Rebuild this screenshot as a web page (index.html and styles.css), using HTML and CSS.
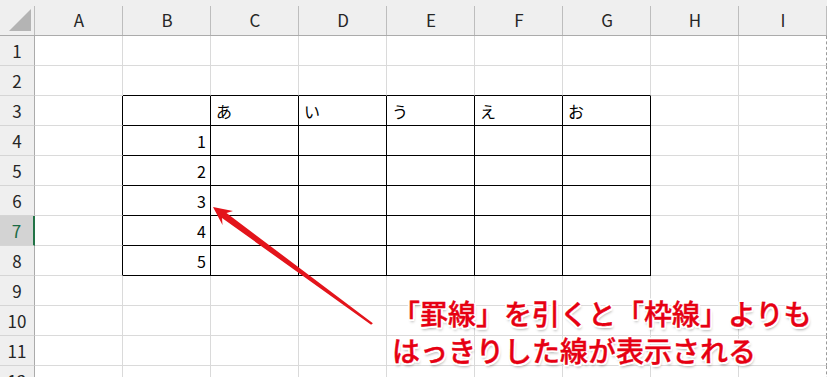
FILE: index.html
```html
<!DOCTYPE html>
<html lang="ja">
<head>
    <meta charset="UTF-8">
    <meta name="viewport" content="width=device-width, initial-scale=1.0">
    <title>罫線と枠線</title>
    <link rel="stylesheet" href="styles.css">
</head>
<body>
    <div class="page">
        <div class="sheet" id="sheet">
            <div class="corner"><span class="corner-mark"></span></div>
        </div>

        <svg class="arrow" width="827" height="377" viewBox="0 0 827 377">
            <polygon points="213,207 233,211 226.5,213 372.9,323.2 371.1,324.8 222,218 222.5,225" />
        </svg>

        <div class="note">「罫線」を引くと「枠線」よりも<br>はっきりした線が表示される</div>
    </div>

    <script>
        var cols = ['A', 'B', 'C', 'D', 'E', 'F', 'G', 'H', 'I'];
        var rowCount = 12;
        var activeRow = 7;

        // values keyed by row number, then column index (A = 0)
        var data = {
            3: { 2: 'あ', 3: 'い', 4: 'う', 5: 'え', 6: 'お' },
            4: { 1: '1' },
            5: { 1: '2' },
            6: { 1: '3' },
            7: { 1: '4' },
            8: { 1: '5' }
        };

        // ruled range B3:G8
        var ruleTop = 3, ruleBottom = 8, ruleLeft = 1, ruleRight = 6;

        var sheet = document.getElementById('sheet');

        cols.forEach(function (name) {
            var head = document.createElement('div');
            head.className = 'col-head';
            head.textContent = name;
            sheet.appendChild(head);
        });

        for (var r = 1; r <= rowCount; r++) {
            var rowHead = document.createElement('div');
            rowHead.className = 'row-head' + (r === activeRow ? ' active' : '');
            rowHead.textContent = r;
            sheet.appendChild(rowHead);

            for (var c = 0; c < cols.length; c++) {
                var cell = document.createElement('div');
                var classes = ['cell'];
                var inRows = r >= ruleTop && r <= ruleBottom;
                var inCols = c >= ruleLeft && c <= ruleRight;

                if (inRows && (inCols || c === ruleLeft - 1)) classes.push('rule-r');
                if (inCols && (inRows || r === ruleTop - 1)) classes.push('rule-b');
                if (c === cols.length - 1) classes.push('page-break');

                var value = data[r] && data[r][c];
                if (value) {
                    classes.push(/^\d+$/.test(value) ? 'num' : 'text');
                    cell.textContent = value;
                }

                cell.className = classes.join(' ');
                sheet.appendChild(cell);
            }
        }
    </script>
</body>
</html>
```

FILE: styles.css
```css
/* spreadsheet view */
body {
    font-family: "Noto Sans CJK JP", "Noto Sans", sans-serif;
    margin: 0;
    background: #fff;
    overflow: hidden;
    height: 377px;
}
.page {
    position: relative;
    width: 827px;
    height: 377px;
    overflow: hidden;
}
.sheet {
    display: grid;
    grid-template-columns: 35px repeat(9, 88px);
    grid-template-rows: 36px repeat(12, 30px);
}
.sheet > div {
    box-sizing: border-box;
}
.corner {
    background: linear-gradient(#bdbdbd, #bdbdbd) right 6px / 1px 30px no-repeat, #efefef;
    border-bottom: 1px solid #ababab;
    display: flex;
    align-items: flex-end;
    justify-content: flex-end;
    padding: 0 4px 4px 0;
}
.corner-mark {
    width: 22px;
    height: 22px;
    background: #b4b4b4;
    clip-path: polygon(100% 0, 100% 100%, 0 100%);
}
.col-head {
    background: linear-gradient(#bdbdbd, #bdbdbd) right 6px / 1px 30px no-repeat, #efefef;
    border-bottom: 1px solid #ababab;
    color: #262626;
    font-size: 17px;
    display: flex;
    align-items: center;
    justify-content: center;
    padding-top: 4px;
}
.row-head {
    background: #efefef;
    border-right: 1px solid #ababab;
    border-bottom: 1px solid #d5d5d5;
    color: #262626;
    font-size: 17px;
    display: flex;
    align-items: center;
    justify-content: center;
}
.row-head.active {
    background: #d3d3d3;
    color: #1c6b45;
    border-right: 2px solid #217346;
}
.cell {
    border-right: 1px solid #dadada;
    border-bottom: 1px solid #dadada;
    font-size: 16px;
    color: #000;
    display: flex;
    align-items: center;
}
.cell.text {
    padding-left: 5px;
}
.cell.num {
    justify-content: flex-end;
    padding-right: 4px;
}
.cell.page-break {
    border-right: 1px dashed #9a9a9a;
}
.cell.rule-r {
    border-right-color: #000;
}
.cell.rule-b {
    border-bottom-color: #000;
}

/* annotation */
.arrow {
    position: absolute;
    left: 0;
    top: 0;
    pointer-events: none;
}
.arrow polygon {
    fill: #e3141b;
}
.note {
    position: absolute;
    left: 392px;
    top: 295px;
    font-size: 28px;
    line-height: 37px;
    font-weight: 500;
    color: #e60012;
    white-space: nowrap;
    -webkit-text-stroke: 0.4px #e60012;
    text-shadow:
        -2px 0 0 #fff, 2px 0 0 #fff, 0 -2px 0 #fff, 0 2px 0 #fff,
        -1.5px -1.5px 0 #fff, 1.5px -1.5px 0 #fff, -1.5px 1.5px 0 #fff, 1.5px 1.5px 0 #fff,
        1px 3px 3px rgba(0, 0, 0, 0.35);
}
```
